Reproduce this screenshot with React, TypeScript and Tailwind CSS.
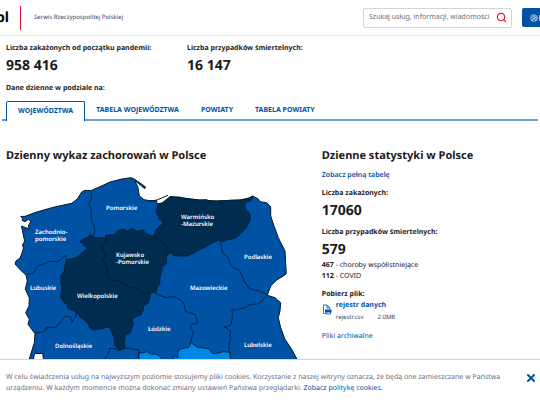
import { CircleUserRound, Search, X } from 'lucide-react';

type Point = [number, number];

const stats = [
    { label: 'Liczba zakażonych od początku pandemii:', value: '958 416' },
    { label: 'Liczba przypadków śmiertelnych:', value: '16 147' },
];

const tabs = ['WOJEWÓDZTWA', 'TABELA WOJEWÓDZTWA', 'POWIATY', 'TABELA POWIATY'];

const country: Point[] = [
    [15, 263], [16, 260], [20, 257], [22, 252], [23.5, 247], [22.5, 244], [24.7, 240], [23.3, 234], [21.5, 225],
    [24, 226], [29.3, 228], [28.3, 225], [31, 220], [28.3, 218.5], [25, 220.7], [22, 219.3], [22.7, 217.5],
    [20.7, 215.5], [25, 215.3], [36.7, 211], [53.3, 206.3], [71.7, 202.3], [77.3, 198], [81.7, 191], [85, 189.3],
    [90.7, 189.7], [100, 185.7], [110, 181], [121.7, 178], [131, 176.7], [134.3, 178], [145.7, 186], [144.7, 187.7],
    [135, 179.5], [138, 186.7], [139.3, 195], [144, 198.7], [150, 199.7], [156.7, 199.7], [157, 203], [162.7, 201.7],
    [170, 195.7], [183.3, 197], [200, 199], [216.7, 200], [240, 199], [250, 196.7], [252.7, 195], [258.3, 198],
    [260, 200.7], [266.7, 201.7], [270.7, 206], [270.7, 215], [274, 225], [278.3, 236.7], [285, 250], [286.3, 272.7],
    [283.3, 275], [276.7, 279], [270.7, 285], [267.3, 294.3], [275, 296.7], [280.7, 301.7], [280, 310], [278.3, 316.7],
    [280.7, 326.7], [285, 338.3], [291.7, 348.3], [298, 360], [310, 380], [44, 380], [43.5, 359], [42.7, 352.5],
    [34.5, 352.5], [33.5, 358], [29, 359], [34.3, 341.7], [35, 332.7], [28, 323.3], [29.3, 318.3], [25.7, 311.7],
    [29, 305], [29.3, 296.7], [25.3, 288.3], [27.3, 280], [26, 274], [20.7, 269.3],
];

const regions: { fill: string; points: Point[] }[] = [
    {
        // Warmińsko-Mazurskie
        fill: '#002d4f',
        points: [
            [170, 195.7], [183.3, 197], [200, 199], [216.7, 200], [240, 199], [250, 196.7], [252.7, 195], [250, 200],
            [245, 201.7], [245.7, 208.3], [250, 213.3], [250, 220], [245, 228.3], [233.3, 237.7], [221.7, 241],
            [218.3, 239.3], [210, 243.3], [200, 248.3], [186.7, 255], [175, 255], [170.7, 251.7], [166.7, 246.7],
            [160, 240], [154, 235], [155, 231.7], [159.3, 225], [163.3, 223.3], [162.7, 219.3], [159, 218.3],
            [156.7, 211.7], [157.3, 205], [162.7, 201.7],
        ],
    },
    {
        // Kujawsko-Pomorskie
        fill: '#002d4f',
        points: [
            [106, 234.3], [115, 233.3], [118.3, 229.3], [125, 228.3], [128, 230], [131.7, 227.3], [136.7, 230],
            [143.3, 229.3], [146.7, 233.3], [154, 235], [160, 240], [166.7, 246.7], [170.7, 251.7], [166.7, 255],
            [166.7, 261.7], [161.7, 266.7], [161, 273.3], [160, 281.7], [156.7, 286.7], [156, 292.3], [150, 291.7],
            [143.3, 293.3], [138.3, 288.3], [128.3, 286], [121.7, 281.7], [113.3, 279.3], [106, 274], [107.3, 268.3],
            [103.3, 260], [105, 253.3], [101.7, 246.7], [106, 240],
        ],
    },
    {
        // Wielkopolskie
        fill: '#002d4f',
        points: [
            [90, 233.3], [95, 236.7], [106, 237], [106, 240], [101.7, 246.7], [105, 253.3], [103.3, 260],
            [107.3, 268.3], [106, 274], [113.3, 279.3], [121.7, 281.7], [128.3, 286], [138.3, 288.3], [143.3, 293.3],
            [150, 291.7], [148.3, 301.7], [143.3, 306], [141.7, 313.3], [133.3, 317], [133.3, 323.3], [130, 331.7],
            [125, 335], [125, 346], [120, 349.3], [115, 345], [113.3, 334], [108.3, 325.7], [100, 327.7],
            [91.7, 328.3], [88.3, 322.7], [80, 316], [76.7, 311.7], [68.3, 307.7], [66.7, 303.3], [60.7, 296.7],
            [61.7, 285], [60, 275], [64.3, 270], [66.7, 258.3], [76.7, 256.7], [87, 248], [86, 245], [80, 241],
            [81.7, 239], [87.3, 237.3],
        ],
    },
    {
        // Śląskie
        fill: '#0087e6',
        points: [[138.5, 352], [146.7, 350.7], [151.7, 353.3], [158.3, 354], [162, 358], [165, 370], [138.5, 370]],
    },
    {
        // Świętokrzyskie
        fill: '#0087e6',
        points: [
            [173.3, 355], [178.3, 356.5], [178.3, 349.3], [188.3, 346.7], [190.7, 341], [198.3, 346.7],
            [209.3, 347.7], [213.3, 352.7], [222, 351], [230, 351.7], [231, 370], [174, 370],
        ],
    },
];

const borders: Point[][] = [
    [[90.7, 189.7], [91.7, 195], [88.3, 203.3], [91, 207], [91.7, 220], [94.3, 226.7], [93.3, 235]],
    [[26, 274], [33.3, 271.7], [36.7, 266], [43.3, 263], [50, 260], [55, 261], [61, 258.3], [66, 254], [66.7, 258.3]],
    [[35, 332.7], [43.3, 330.7], [46.7, 326.7], [55, 326.7], [65, 315], [70.7, 316], [71.7, 321.7], [76, 315], [76.7, 311.7]],
    [[104, 359], [108.3, 353.3], [109.3, 347.3], [120, 349.3], [125, 347.3], [138.3, 348.7], [138.5, 359]],
    [[156, 292.3], [166.7, 296.7], [175, 296], [183.3, 301.7], [185, 310], [195, 313.3], [197.7, 321.7], [190.7, 324.3], [193.3, 333.3], [190.7, 341]],
    [[220, 241], [221.7, 250], [228.3, 256.7], [229.3, 261], [233.3, 266.7], [240, 270], [244, 280], [249.3, 287.7], [258.3, 289.3], [267.3, 294.3]],
    [[267.3, 294.3], [258.3, 302.7], [252, 303.5], [245, 306.7], [231.7, 309], [232.7, 316.7], [230, 325], [224, 325.7], [230.7, 330], [229.3, 341.7], [230.5, 359]],
];

const labels = [
    { x: 106, y: 209, text: 'Pomorskie' },
    { x: 181, y: 218, text: 'Warmińsko' },
    { x: 181, y: 225, text: '-Mazurskie' },
    { x: 35, y: 233, text: 'Zachodnio-' },
    { x: 35, y: 240, text: 'pomorskie' },
    { x: 116, y: 256, text: 'Kujawsko' },
    { x: 116, y: 263, text: '-Pomorskie' },
    { x: 244, y: 258, text: 'Podlaskie' },
    { x: 30, y: 289, text: 'Lubuskie' },
    { x: 77, y: 297, text: 'Wielkopolskie' },
    { x: 190, y: 289, text: 'Mazowieckie' },
    { x: 148, y: 330, text: 'Łódzkie' },
    { x: 55, y: 347, text: 'Dolnośląskie' },
    { x: 244, y: 346, text: 'Lubelskie' },
];

// Adds small bends between points. Depends only on position, so shared borders stay in line.
function roughPath(points: Point[], closed: boolean) {
    const all = closed ? [...points, points[0]] : points;
    let d = `M${all[0][0]} ${all[0][1]}`;
    for (let i = 1; i < all.length; i++) {
        const [x1, y1] = all[i - 1];
        const [x2, y2] = all[i];
        for (const t of [1 / 3, 2 / 3]) {
            const x = x1 + (x2 - x1) * t;
            const y = y1 + (y2 - y1) * t;
            d += `L${(x + Math.sin(x * 7 + y * 3) * 0.7).toFixed(1)} ${(y + Math.cos(x * 5 + y * 4) * 0.7).toFixed(1)}`;
        }
        d += `L${x2} ${y2}`;
    }
    return d + (closed ? 'Z' : '');
}

function PolandMap() {
    return (
        <svg viewBox="6 170 304 200" className="block w-[304px] shrink-0" role="img" aria-label="Mapa województw">
            <path d={`M${country.map((p) => p.join(' ')).join('L')}Z`} fill="#0052a5" stroke="#06182b" />
            <path d="M150 200L157 199L168 194.300" fill="none" stroke="#06182b" />
            {regions.map((region, i) => (
                <path key={i} d={roughPath(region.points, true)} fill={region.fill} stroke="#06182b" strokeWidth="0.8" />
            ))}
            {borders.map((line, i) => (
                <path key={i} d={roughPath(line, false)} fill="none" stroke="#06182b" strokeWidth="0.8" />
            ))}
            {labels.map((label) => (
                <text key={label.text} x={label.x} y={label.y} className="fill-white text-[6px] font-semibold">
                    {label.text}
                </text>
            ))}
        </svg>
    );
}

function FileIcon() {
    return (
        <svg viewBox="0 0 10 11" className="mt-[3px] h-[11px] w-[10px] shrink-0" fill="none" stroke="#0052a5">
            <path d="M3.500 9.500H1.500V1H5L8 4V5M5 1V4H8" strokeWidth="0.8" />
            <path d="M3 5.500H9.500V8.500H3Z" fill="#0052a5" stroke="none" />
            <path d="M4 8V10H8.500V8" strokeWidth="0.8" />
        </svg>
    );
}

export default function App() {
    return (
        <div className="flex h-screen flex-col overflow-hidden bg-white font-['Noto_Sans','Open_Sans',sans-serif] text-[#1b1b1b] [text-rendering:geometricPrecision]">
            <header className="flex h-9 shrink-0 items-center border-b border-gray-200">
                <span className="-ml-2 w-7 text-sm font-bold text-black">.pl</span>
                <span className="h-6 border-l border-[#dc143c]" />
                <span className="ml-[13px] flex-1 text-[6px] text-gray-700">Serwis Rzeczypospolitej Polskiej</span>
                <form className="flex h-5 w-[149px] items-center rounded-xs border border-gray-300 pr-1 pl-[5px]">
                    <input
                        type="text"
                        aria-label="Szukaj"
                        placeholder="Szukaj usług, informacji, wiadomości"
                        className="min-w-0 flex-1 text-[7px] outline-none placeholder:text-gray-500"
                    />
                    <button type="button" aria-label="Szukaj">
                        <Search className="h-[11px] w-[11px] text-[#dc143c]" strokeWidth={2.5} />
                    </button>
                </form>
                <button type="button" aria-label="Profil" className="ml-2.5 flex h-[19px] w-[18px] items-center overflow-hidden rounded-l-xs bg-[#0052a5] pl-2 text-white">
                    <CircleUserRound className="h-2 w-2 shrink-0" />
                    <span className="ml-px h-1.5 w-px shrink-0 bg-white/70" />
                </button>
            </header>

            <main className="min-h-0 flex-1 overflow-hidden px-1.5 pt-2">
                <dl className="flex">
                    {stats.map((stat) => (
                        <div key={stat.label} className="w-[181px]">
                            <dt className="text-[7px] leading-[10px] font-bold whitespace-nowrap">{stat.label}</dt>
                            <dd className="mt-0.5 text-[14px] leading-5 font-bold">{stat.value}</dd>
                        </div>
                    ))}
                </dl>
                <p className="mt-[7px] text-[7px] leading-3 font-bold">Dane dzienne w podziale na:</p>

                <nav className="-mx-1 mt-1.5 flex border-b-2 border-[#6a9fd4] pl-1" role="tablist">
                    {tabs.map((tab, i) => (
                        <button
                            key={tab}
                            type="button"
                            role="tab"
                            aria-selected={i === 0}
                            className={
                                i === 0
                                    ? '-mb-0.5 rounded-t-xs border border-b-0 border-[#0052a5] bg-white px-[11px] text-[7px] font-bold text-[#0052a5]'
                                    : 'h-[18px] px-[11px] text-[7px] font-bold text-[#0052a5]'
                            }
                        >
                            {tab}
                        </button>
                    ))}
                </nav>

                <div className="mt-[27px] grid grid-cols-5">
                    <section className="col-span-3">
                        <h2 className="text-[11px] leading-4 font-bold">Dzienny wykaz zachorowań w Polsce</h2>
                        <div className="mt-[7px]">
                            <PolandMap />
                        </div>
                    </section>
                    <section className="col-span-2 -ml-px text-[7px] leading-3">
                        <h2 className="text-[11px] leading-4 font-bold">Dzienne statystyki w Polsce</h2>
                        <a href="#tabela" className="mt-1.5 block font-semibold text-[#0052a5]">Zobacz pełną tabelę</a>
                        <h3 className="mt-1.5 font-bold">Liczba zakażonych:</h3>
                        <p className="mt-px text-[14px] leading-5 font-bold">17060</p>
                        <h3 className="mt-1.5 font-bold">Liczba przypadków śmiertelnych:</h3>
                        <p className="mt-px text-[14px] leading-5 font-bold">579</p>
                        <p className="leading-[11px]"><b>467</b> - choroby współistniejące</p>
                        <p className="leading-[11px]"><b>112</b> - COVID</p>
                        <h3 className="mt-[7px] font-bold">Pobierz plik:</h3>
                        <div className="flex gap-1">
                            <FileIcon />
                            <div>
                                <a href="#rejestr" className="block leading-[10px] font-bold text-[#0052a5]">rejestr danych</a>
                                <p className="flex gap-3.5 text-[6px] leading-3 text-gray-700">
                                    <span>rejestr.csv</span>
                                    <span>2.0MB</span>
                                </p>
                            </div>
                        </div>
                        <a href="#archiwum" className="mt-2 block text-[#0052a5]">Pliki archiwalne</a>
                    </section>
                </div>
            </main>

            <footer className="flex h-12 shrink-0 items-start border-t border-gray-300 bg-white pt-3 pr-[3px] pl-1.5">
                <p className="flex-1 pr-3 text-[7px] leading-[11px] text-gray-500">
                    W celu świadczenia usług na najwyższym poziomie stosujemy pliki cookies. Korzystanie z naszej witryny oznacza, że będą one zamieszczane w Państwa
                    urządzeniu. W każdym momencie można dokonać zmiany ustawień Państwa przeglądarki.{' '}
                    <a href="#cookies" className="text-[#0052a5]">Zobacz politykę cookies.</a>
                </p>
                <button type="button" aria-label="Zamknij" className="text-[#0052a5]">
                    <X className="h-3 w-3" strokeWidth={4} />
                </button>
            </footer>
        </div>
    );
}
